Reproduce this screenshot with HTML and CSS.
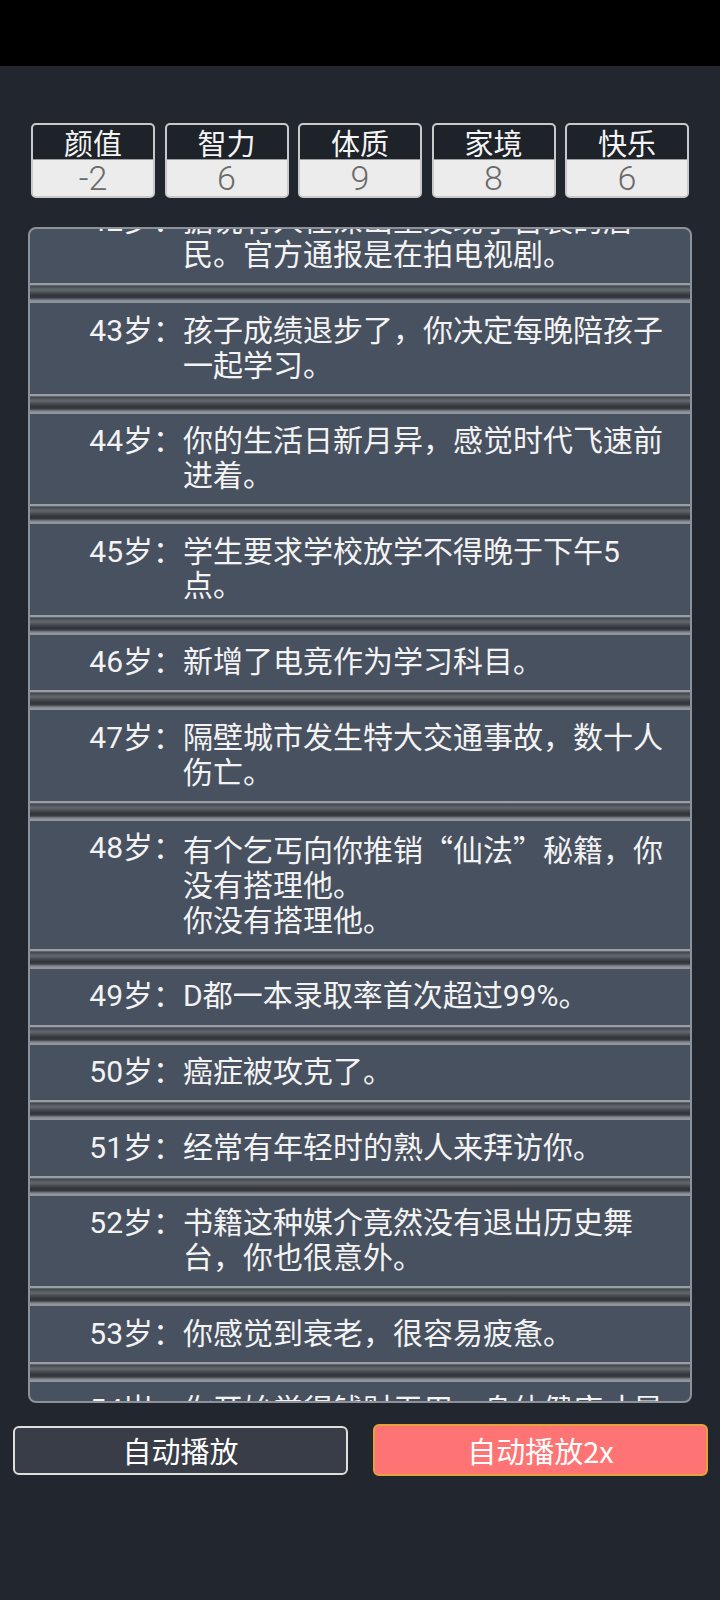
FILE: index.html
```html
<!DOCTYPE html>
<html lang="zh-CN">
<head>
<meta charset="utf-8">
<title>人生重开</title>
<link rel="stylesheet" href="styles.css">
</head>
<body>
<div class="status-bar"></div>
<main class="screen">
  <section class="stats">
    <div class="stat"><div class="stat-name">颜值</div><div class="stat-val">-2</div></div>
    <div class="stat"><div class="stat-name">智力</div><div class="stat-val">6</div></div>
    <div class="stat"><div class="stat-name">体质</div><div class="stat-val">9</div></div>
    <div class="stat"><div class="stat-name">家境</div><div class="stat-val">8</div></div>
    <div class="stat"><div class="stat-name">快乐</div><div class="stat-val">6</div></div>
  </section>

  <section class="log">
    <ul class="log-list">
      <li class="entry"><span class="age">42岁：</span><span class="text">据说有人在深山里发现了古装的居民。官方通报是在拍电视剧。</span></li>
      <li class="sep"></li>
      <li class="entry"><span class="age">43岁：</span><span class="text">孩子成绩退步了，你决定每晚陪孩子一起学习。</span></li>
      <li class="sep"></li>
      <li class="entry"><span class="age">44岁：</span><span class="text">你的生活日新月异，感觉时代飞速前进着。</span></li>
      <li class="sep"></li>
      <li class="entry"><span class="age">45岁：</span><span class="text">学生要求学校放学不得晚于下午5点。</span></li>
      <li class="sep"></li>
      <li class="entry"><span class="age">46岁：</span><span class="text">新增了电竞作为学习科目。</span></li>
      <li class="sep"></li>
      <li class="entry"><span class="age">47岁：</span><span class="text">隔壁城市发生特大交通事故，数十人伤亡。</span></li>
      <li class="sep"></li>
      <li class="entry"><span class="age">48岁：</span><span class="text">有个乞丐向你推销<span class="cjk">“仙法”</span>秘籍，你没有搭理他。<br>你没有搭理他。</span></li>
      <li class="sep"></li>
      <li class="entry"><span class="age">49岁：</span><span class="text">D都一本录取率首次超过99%。</span></li>
      <li class="sep"></li>
      <li class="entry"><span class="age">50岁：</span><span class="text">癌症被攻克了。</span></li>
      <li class="sep"></li>
      <li class="entry"><span class="age">51岁：</span><span class="text">经常有年轻时的熟人来拜访你。</span></li>
      <li class="sep"></li>
      <li class="entry"><span class="age">52岁：</span><span class="text">书籍这种媒介竟然没有退出历史舞台，你也很意外。</span></li>
      <li class="sep"></li>
      <li class="entry"><span class="age">53岁：</span><span class="text">你感觉到衰老，很容易疲惫。</span></li>
      <li class="sep"></li>
      <li class="entry"><span class="age">54岁：</span><span class="text">你开始觉得钱财无用，身体健康才是最重要的。</span></li>
    </ul>
  </section>

  <div class="actions">
    <button class="btn btn-auto">自动播放</button>
    <button class="btn btn-fast">自动播放2x</button>
  </div>
</main>
</body>
</html>
```

FILE: styles.css
```css
* { box-sizing: border-box; }

html, body {
  margin: 0;
  padding: 0;
}

body {
  width: 720px;
  height: 1600px;
  background: #22262e;
  font-family: Roboto, "Noto Sans CJK SC", sans-serif;
  color: #f2f2f2;
  overflow: hidden;
}

.status-bar {
  height: 66px;
  background: #000;
}

.screen {
  display: flex;
  flex-direction: column;
}

/* ---------- stats ---------- */
.stats {
  display: grid;
  grid-template-columns: repeat(5, 1fr);
  gap: 9.5px;
  margin: 56.5px 31px 0 31px;
}

.stat {
  border: 2px solid #c8c9cb;
  border-radius: 5px;
  display: flex;
  flex-direction: column;
  background: #ececec;
}

.stat-name {
  height: 35px;
  background: #1e2229;
  color: #f4f4f4;
  font-family: "Noto Sans CJK SC", sans-serif;
  font-size: 29px;
  line-height: 34px;
  text-align: center;
  border-bottom: 1px solid #9a9ca0;
  border-radius: 3px 3px 0 0;
}

.stat-val {
  height: 36px;
  background: #ececec;
  color: #6a6a6a;
  font-family: Roboto, sans-serif;
  font-weight: 300;
  font-size: 34px;
  line-height: 36px;
  text-align: center;
  border-radius: 0 0 3px 3px;
}

/* ---------- log ---------- */
.log {
  margin: 29.5px 28.5px 0 28px;
  height: 1176px;
  border: 2px solid #8d929a;
  border-radius: 8px;
  background: #485160;
  overflow: hidden;
}

.log-list {
  list-style: none;
  margin: -36px 0 0 0;
  padding: 0;
}

.entry {
  display: grid;
  grid-template-columns: 153px 486px;
  padding: 10.5px 0;
  font-size: 30px;
  line-height: 34.7px;
  color: #f3f3f3;
}

.age {
  text-align: right;
  white-space: nowrap;
}

.text {
  line-break: strict;
}

.cjk {
  font-family: "Noto Sans CJK SC", sans-serif;
}

.sep {
  height: 20px;
  background: linear-gradient(to bottom,
    #999da4 0px,
    #999da4 1.5px,
    #41454c 3px,
    #555960 5px,
    #63676e 7px,
    #44484f 10px,
    #2f3238 13px,
    #3c3f45 15px,
    #6f737a 16.5px,
    #90959c 18px,
    #90959c 20px);
}

/* ---------- buttons ---------- */
.actions {
  display: flex;
  align-items: center;
  gap: 25px;
  margin-top: 21px;
  padding: 0 12px 0 13px;
}

.btn {
  flex: 1;
  font-family: "Noto Sans CJK SC", sans-serif;
  font-size: 29px;
  color: #ffffff;
  border-radius: 6px;
  padding: 0;
  cursor: pointer;
}

.btn-auto {
  height: 49px;
  background: #393d47;
  border: 2px solid #dedede;
  line-height: 43px;
}

.btn-fast {
  height: 52px;
  background: #fe7474;
  border: 2px solid #e6a23a;
  line-height: 46px;
}
```
